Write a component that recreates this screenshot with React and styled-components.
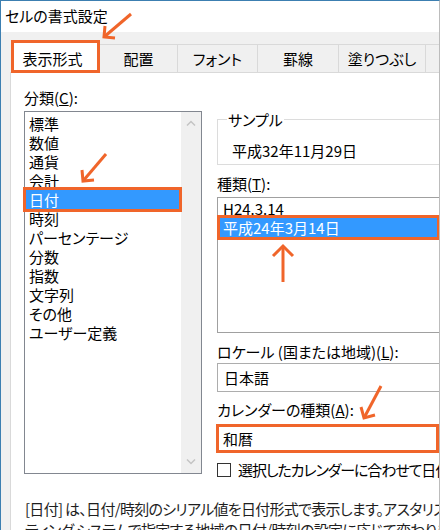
import React from 'react'
import styled, { createGlobalStyle } from 'styled-components'

const ORANGE = '#f0652a'
const SELECT = '#3399ff'

const GlobalStyle = createGlobalStyle`
  html, body { margin: 0; padding: 0; background: #fff; }
  body {
    font-family: "Noto Sans CJK JP", "Noto Sans", sans-serif;
    font-size: 15px;
    color: #000;
    font-feature-settings: "palt";
  }
`

const Window = styled.div`
  position: relative;
  width: 440px;
  height: 530px;
  box-sizing: border-box;
  border-left: 1px solid #3c7fb1;
  border-top: 1px solid #3c7fb1;
  border-right: 1px solid #bcbcbc;
  overflow: hidden;
  display: flex;
  flex-direction: column;
  background: #fff;
`

const TitleBar = styled.div`
  flex: none;
  height: 31px;
  line-height: 29px;
  padding-left: 4px;
  white-space: nowrap;
`

const Body = styled.div`
  flex: 1;
  min-height: 0;
  display: flex;
  flex-direction: column;
  background: #f0f0f0;
  padding: 12px 0 0 9px;
`

const TabStrip = styled.div`
  flex: none;
  display: flex;
  align-items: flex-start;
  height: 28px;
  position: relative;
  z-index: 1;
`

const Tab = styled.div`
  flex: none;
  width: ${p => p.$w}px;
  height: 28px;
  box-sizing: border-box;
  border-top: 1px solid #d9d9d9;
  border-right: 1px solid #d9d9d9;
  background: #f0f0f0;
  display: flex;
  align-items: center;
  justify-content: center;
  line-height: 19px;
  white-space: nowrap;
`

const ActiveTab = styled(Tab)`
  margin-top: -4px;
  margin-left: 1px;
  height: 33px;
  border: 3px solid ${ORANGE};
  background: #fff;
  padding: 3px 6px 0 0;
`

const Panel = styled.div`
  flex: 1;
  min-height: 0;
  background: #fff;
  border-top: 1px solid #d9d9d9;
  border-left: 1px solid #d9d9d9;
  padding: 15px 0 0 13px;
  display: flex;
  flex-direction: column;
`

const Columns = styled.div`
  display: flex;
  align-items: flex-start;
  gap: 15px;
`

const LeftCol = styled.div`
  flex: none;
  width: 178px;
`

const RightCol = styled.div`
  flex: none;
  width: 240px;
`

const Label = styled.div`
  line-height: 19px;
  white-space: nowrap;
  margin-top: ${p => p.$mt || 0}px;
`

const CategoryList = styled.div`
  margin-top: 4px;
  height: 363px;
  box-sizing: border-box;
  border: 1px solid #828790;
  display: flex;
`

const Items = styled.div`
  flex: 1;
  padding: 2px 0 0 1px;
`

const Item = styled.div`
  position: relative;
  z-index: 1;
  width: ${p => p.$w}px;
  box-sizing: border-box;
  line-height: 19px;
  padding-left: 3px;
  white-space: nowrap;
  background: ${p => (p.$selected ? SELECT : 'transparent')};
  color: ${p => (p.$selected ? '#fff' : '#000')};
  box-shadow: ${p => (p.$selected ? `0 0 0 3px ${ORANGE}` : 'none')};
`

const ScrollBar = styled.div`
  flex: none;
  width: 20px;
  background: #f0f0f0;
  display: flex;
  flex-direction: column;
  justify-content: space-between;
  align-items: center;
  padding: 8px 0;
`

const Fieldset = styled.fieldset`
  margin: 22px 0 0 0;
  padding: 0 0 4px 9px;
  border: 1px solid #dcdcdc;
  min-width: 0;
`

const Legend = styled.legend`
  padding: 0 1px;
  line-height: 19px;
`

const SampleText = styled.div`
  margin-top: 12px;
  padding-left: 5px;
  line-height: 19px;
  white-space: nowrap;
`

const TypeList = styled.div`
  margin-top: 4px;
  height: 136px;
  box-sizing: border-box;
  border: 1px solid #a0a0a0;
  padding: 1px 0 0 2px;
`

const ComboBox = styled.div`
  margin-top: 2px;
  height: 29px;
  box-sizing: border-box;
  border: 1px solid #adadad;
  padding-left: 6px;
  line-height: 27px;
`

const CalendarBox = styled.div`
  margin: 5px 0 0 -1px;
  width: 223px;
  height: 29px;
  box-sizing: border-box;
  border: 3px solid ${ORANGE};
  padding-left: 4px;
  line-height: 23px;
`

const CheckRow = styled.div`
  margin-top: 9px;
  height: 15px;
  display: flex;
  align-items: center;
  gap: 7px;
  white-space: nowrap;
  letter-spacing: -1.1px;
`

const CheckBox = styled.span`
  flex: none;
  width: 14px;
  height: 14px;
  box-sizing: border-box;
  border: 1px solid #333;
  background: #fff;
`

const Description = styled.div`
  margin-top: ${p => (p.$first ? 21 : 0)}px;
  padding-left: 1px;
  line-height: 21px;
  white-space: nowrap;
  letter-spacing: -0.7px;
  color: #1e1e1e;
`

const Overlay = styled.svg`
  position: absolute;
  top: -1px;
  left: -1px;
  z-index: 5;
  pointer-events: none;
`

const Chevron = ({ up }) => (
  <svg width="10" height="6" viewBox="0 0 10 6">
    <polyline
      points={up ? '1,5.5 5,1.5 9,5.5' : '1,0.5 5,4.5 9,0.5'}
      fill="none"
      stroke="#c4c4c4"
      strokeWidth="1.5"
    />
  </svg>
)

const Arrow = ({ from, tip, arms }) => (
  <g stroke={ORANGE} strokeWidth="3" fill="none" strokeLinejoin="miter">
    <line x1={from[0]} y1={from[1]} x2={tip[0]} y2={tip[1]} />
    <polyline points={`${arms[0].join(',')} ${tip.join(',')} ${arms[1].join(',')}`} />
  </g>
)

const tabs = [
  { label: '配置', w: 78 },
  { label: 'フォント', w: 80 },
  { label: '罫線', w: 81 },
  { label: '塗りつぶし', w: 87 },
  { label: '保護', w: 70 },
]

const categories = [
  '標準', '数値', '通貨', '会計', '日付', '時刻', 'パーセンテージ',
  '分数', '指数', '文字列', 'その他', 'ユーザー定義',
]

export default function App() {
  return (
    <>
      <GlobalStyle />
      <Window>
        <TitleBar>セルの書式設定</TitleBar>
        <Body>
          <TabStrip>
            <ActiveTab $w={89}>表示形式</ActiveTab>
            {tabs.map(t => (
              <Tab key={t.label} $w={t.w}>{t.label}</Tab>
            ))}
          </TabStrip>
          <Panel>
            <Columns>
              <LeftCol>
                <Label>分類(<u>C</u>):</Label>
                <CategoryList>
                  <Items>
                    {categories.map(c => (
                      <Item key={c} $w={153} $selected={c === '日付'}>{c}</Item>
                    ))}
                  </Items>
                  <ScrollBar>
                    <Chevron up />
                    <Chevron />
                  </ScrollBar>
                </CategoryList>
              </LeftCol>
              <RightCol>
                <Fieldset>
                  <Legend>サンプル</Legend>
                  <SampleText>平成32年11月29日</SampleText>
                </Fieldset>
                <Label $mt={9}>種類(<u>T</u>):</Label>
                <TypeList>
                  <Item $w={217}>H24.3.14</Item>
                  <Item $w={217} $selected>平成24年3月14日</Item>
                </TypeList>
                <Label $mt={9}>ロケール (国または地域)(<u>L</u>):</Label>
                <ComboBox>日本語</ComboBox>
                <Label $mt={8}>カレンダーの種類(<u>A</u>):</Label>
                <CalendarBox>和暦</CalendarBox>
                <CheckRow>
                  <CheckBox />
                  <span>選択したカレンダーに合わせて日付を表示する(<u>D</u>)</span>
                </CheckRow>
              </RightCol>
            </Columns>
            <Description $first>
              [日付] は、日付/時刻のシリアル値を日付形式で表示します。アスタリスク (*) で始まる日付の書式は、オペレー
            </Description>
            <Description>
              ティング システムで指定する地域の日付/時刻の設定に応じて変わります。
            </Description>
          </Panel>
        </Body>
        <Overlay width="440" height="530" viewBox="0 0 440 530">
          <Arrow from={[131, 14]} tip={[104, 37]} arms={[[105, 26], [115, 38]]} />
          <Arrow from={[106, 154]} tip={[83, 181]} arms={[[82, 170], [94, 180]]} />
          <Arrow from={[283, 282]} tip={[283, 246]} arms={[[273, 256], [293, 256]]} />
          <Arrow from={[381, 386]} tip={[364, 418]} arms={[[361, 407], [375, 415]]} />
        </Overlay>
      </Window>
    </>
  )
}
